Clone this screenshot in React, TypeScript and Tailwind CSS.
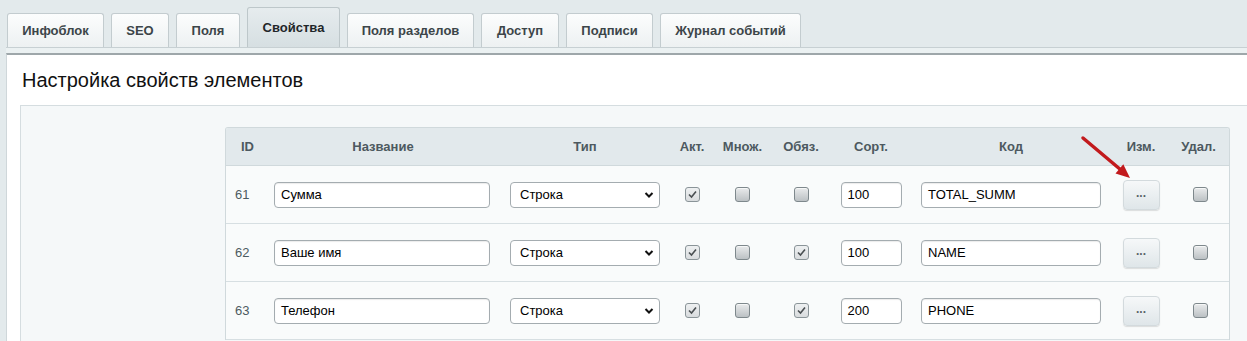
import React from "react";

const tabs = [
  { label: "Инфоблок", w: "w-[97px]" },
  { label: "SEO", w: "w-[58px]" },
  { label: "Поля", w: "w-[64px]" },
  { label: "Свойства", w: "w-[93px]", active: true },
  { label: "Поля разделов", w: "w-[127px]" },
  { label: "Доступ", w: "w-[78px]" },
  { label: "Подписи", w: "w-[87px]" },
  { label: "Журнал событий", w: "w-[141px]" },
];

const rows = [
  { id: 61, name: "Сумма", sort: "100", code: "TOTAL_SUMM", act: true, multi: false, req: false },
  { id: 62, name: "Ваше имя", sort: "100", code: "NAME", act: true, multi: false, req: true },
  { id: 63, name: "Телефон", sort: "200", code: "PHONE", act: true, multi: false, req: true },
];

const cols = "grid grid-cols-[40px_234px_170px_44px_57px_60px_80px_200px_60px_59px]";

const Checkbox = ({ checked }: { checked: boolean }) =>
  checked ? (
    <div className="flex h-[15px] w-[15px] items-center justify-center rounded-[3px] border border-[#8a9498] bg-gradient-to-b from-[#eef0f1] to-[#d9dcde]">
      <svg width="11" height="11" viewBox="0 0 11 11">
        <path d="M2 5.5 L4.5 8 L9 2.5" fill="none" stroke="#4a4f52" strokeWidth="1.6" />
      </svg>
    </div>
  ) : (
    <div className="h-[15px] w-[15px] rounded-[3px] border border-[#7e888c] bg-gradient-to-b from-[#e9ebec] to-[#bcc1c4] shadow-[inset_0_1px_0_#f6f7f7]" />
  );

const TextInput = ({ value, w }: { value: string; w: string }) => (
  <div
    className={`${w} flex h-[26px] items-center rounded-[4px] border border-[#a4acb0] bg-white pl-[6px] text-[13px] text-black shadow-[inset_0_1px_1px_rgba(0,0,0,0.08)]`}
  >
    {value}
  </div>
);

export default function App() {
  return (
    <div className="relative h-[341px] w-[1247px] overflow-hidden bg-[#e3eaec] font-['Liberation_Sans',Arial,sans-serif]">
      {/* Tabs */}
      <div className="flex h-[47px] items-end gap-[7px] pl-[7px]">
        {tabs.map((t) => (
          <div
            key={t.label}
            className={`${t.w} flex items-center justify-center rounded-t-[3px] border border-b-0 text-[13px] font-bold ${
              t.active
                ? "h-[40px] border-[#bdc7ca] bg-gradient-to-b from-[#e6ecee] to-[#d6dfe2] text-[#1f2629]"
                : "h-[34px] border-[#c3cccf] bg-gradient-to-b from-[#fcfdfd] to-[#edf1f2] text-[#3c4549]"
            }`}
          >
            {t.label}
          </div>
        ))}
      </div>
      <div className="ml-[6px] h-[6px] border-t border-[#c7d0d3] bg-[#ebf1f2]" />

      {/* Panel */}
      <div className="ml-[6px] border-l border-t-2 border-l-[#cfd7da] border-t-[#9ea7aa] bg-white">
        <div className="h-[50px] pl-[15px] pt-[14px] text-[20px] leading-[22px] text-[#111]">
          Настройка свойств элементов
        </div>
        <div className="ml-[13px] h-[240px] border border-r-0 border-[#d5dde0] bg-[#f5f8f9] pl-[204px] pt-[21px]">
          <div className="w-[1005px] overflow-hidden rounded-t-[3px] border border-b-0 border-[#d0d9dc] bg-[#f9fbfb]">
            <div className={`${cols} h-[38px] items-center border-b border-[#d0d9dc] bg-[#e2e9ec] text-[13px] font-bold text-[#4d5960]`}>
              <div className="pl-[15px]">ID</div>
              <div className="text-center">Название</div>
              <div className="text-center">Тип</div>
              <div className="text-center">Акт.</div>
              <div className="text-center">Множ.</div>
              <div className="text-center">Обяз.</div>
              <div className="text-center">Сорт.</div>
              <div className="text-center">Код</div>
              <div className="text-center">Изм.</div>
              <div className="pr-[4px] text-center">Удал.</div>
            </div>
            {rows.map((r) => (
              <div key={r.id} className={`${cols} h-[58px] items-center border-b border-[#d7dfe2] text-[13px]`}>
                <div className="pl-[9px] text-[#4d5a60]">{r.id}</div>
                <div className="flex justify-center pr-[2px]">
                  <TextInput value={r.name} w="w-[216px]" />
                </div>
                <div className="flex justify-center">
                  <div className="flex h-[26px] w-[150px] items-center justify-between rounded-[4px] border border-[#a4acb0] bg-white pl-[9px] pr-[5px] text-[13px] text-black">
                    <span>Строка</span>
                    <svg width="10" height="8" viewBox="0 0 10 8">
                      <path d="M1.5 2 L5 5.5 L8.5 2" fill="none" stroke="#111" strokeWidth="2" />
                    </svg>
                  </div>
                </div>
                <div className="flex justify-center">
                  <Checkbox checked={r.act} />
                </div>
                <div className="flex justify-center">
                  <Checkbox checked={r.multi} />
                </div>
                <div className="flex justify-center">
                  <Checkbox checked={r.req} />
                </div>
                <div className="flex justify-center">
                  <TextInput value={r.sort} w="w-[61px]" />
                </div>
                <div className="flex justify-center">
                  <TextInput value={r.code} w="w-[180px]" />
                </div>
                <div className="flex justify-center">
                  <div className="flex h-[30px] w-[37px] items-center justify-center rounded-[4px] border border-[#d3dadd] bg-gradient-to-b from-[#f6f8f9] to-[#dfe6e9] pb-[3px] text-[12px] font-bold text-[#5a6368] shadow-[0_1px_1px_rgba(0,0,0,0.12)]">
                    ...
                  </div>
                </div>
                <div className="flex justify-center">
                  <Checkbox checked={false} />
                </div>
              </div>
            ))}
          </div>
        </div>
      </div>

      {/* Red arrow pointing to the edit button */}
      <svg className="absolute left-[1078px] top-[133px]" width="60" height="50" viewBox="0 0 60 50">
        <line x1="5" y1="5" x2="43" y2="37" stroke="#c21a1d" strokeWidth="3.5" strokeLinecap="round" />
        <polygon points="52,45 37.5,40.5 45.3,31.3" fill="#c21a1d" />
      </svg>
    </div>
  );
}
